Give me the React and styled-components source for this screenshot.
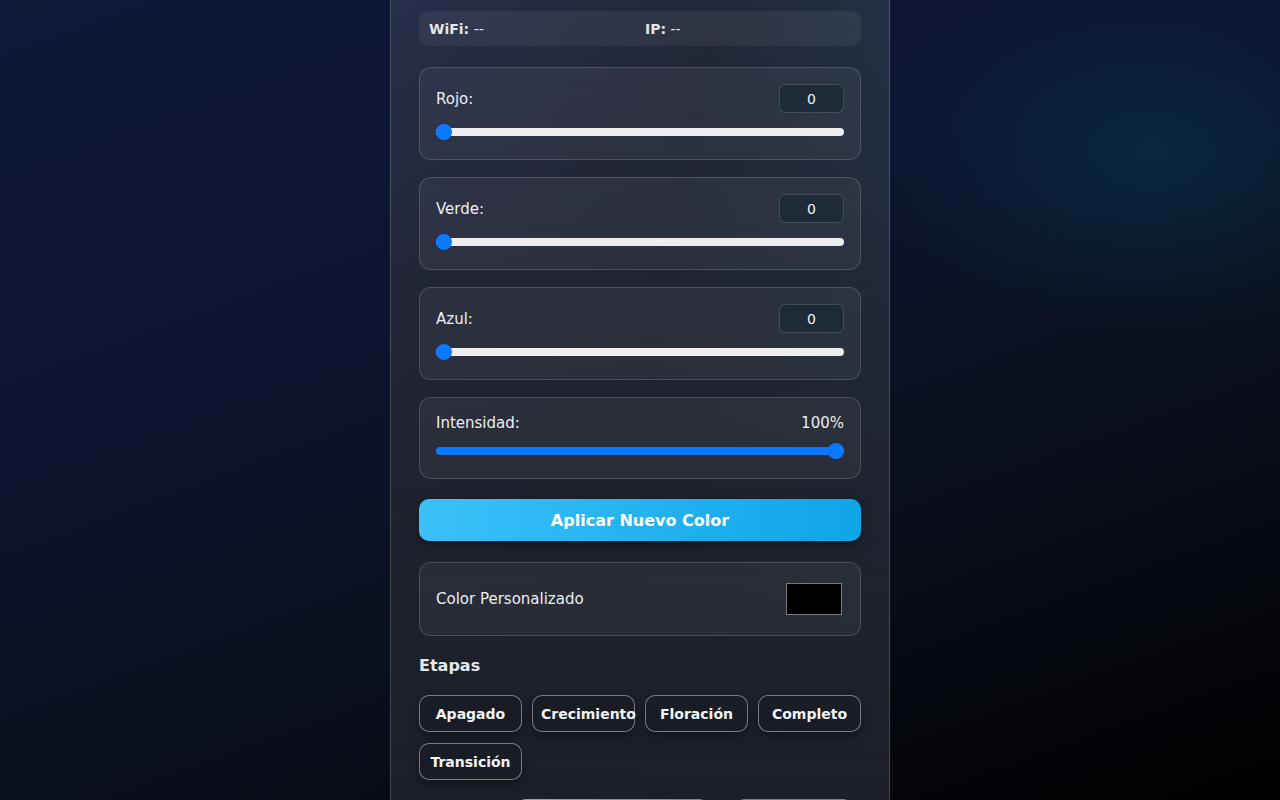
import React from "react";
import styled, { createGlobalStyle } from "styled-components";

const GlobalStyle = createGlobalStyle`
  html, body {
    margin: 0;
    height: 100%;
    overflow: hidden;
  }
  body {
    font-family: "DejaVu Sans", Verdana, sans-serif;
    color: #e5e7eb;
    background:
      radial-gradient(ellipse 420px 260px at 90% 19%, rgba(8, 44, 66, 0.8), transparent 70%),
      linear-gradient(160deg, #0f1838 0%, #0d1430 35%, #0a0f1c 65%, #000000 100%);
    background-attachment: fixed;
  }
`;

const Page = styled.div`
  display: flex;
  justify-content: center;
  min-height: 100vh;
`;

const Panel = styled.div`
  box-sizing: border-box;
  width: 500px;
  padding: 11px 28px 40px;
  border-left: 1px solid rgba(255, 255, 255, 0.18);
  border-right: 1px solid rgba(255, 255, 255, 0.18);
  background:
    linear-gradient(to bottom, rgba(28, 31, 39, 0) 0%, rgba(30, 33, 42, 0.75) 45%, #1c1f27 90%),
    linear-gradient(100deg, #272e4a 0%, #222839 50%, #23374f 100%);
  display: flex;
  flex-direction: column;
`;

const StatusBar = styled.div`
  display: grid;
  grid-template-columns: 1fr 1fr;
  gap: 10px;
  padding: 0 10px;
  height: 35px;
  align-items: center;
  border-radius: 10px;
  background: rgba(255, 255, 255, 0.06);
  font-size: 14px;
  color: #e5e7eb;
  margin-bottom: 21px;

  b {
    font-weight: bold;
  }
`;

const Card = styled.div`
  box-sizing: border-box;
  border: 1px solid rgba(255, 255, 255, 0.16);
  border-radius: 12px;
  background: rgba(255, 255, 255, 0.05);
  padding: ${(p) => p.$pad || "16px 16px 19px"};
  margin-bottom: ${(p) => p.$mb || 17}px;
  display: flex;
  flex-direction: ${(p) => (p.$row ? "row" : "column")};
  align-items: ${(p) => (p.$row ? "center" : "stretch")};
  justify-content: space-between;
  gap: 11px;
`;

const LabelRow = styled.div`
  display: flex;
  align-items: center;
  justify-content: space-between;
  min-height: 18px;
`;

const Label = styled.span`
  font-size: 15px;
  color: #eceef1;
`;

const ValueBox = styled.div`
  box-sizing: border-box;
  width: 65px;
  height: 29px;
  display: flex;
  align-items: center;
  justify-content: center;
  border-radius: 6px;
  border: 1px solid rgba(255, 255, 255, 0.16);
  background: #1f2a38;
  color: #f3f4f6;
  font-size: 14px;
`;

const Range = styled.input.attrs({ type: "range" })`
  -webkit-appearance: none;
  appearance: none;
  width: 408px;
  height: 16px;
  margin: 0;
  background: transparent;

  &::-webkit-slider-runnable-track {
    height: 8px;
    border-radius: 4px;
    background: var(--track);
  }
  &::-webkit-slider-thumb {
    -webkit-appearance: none;
    width: 16px;
    height: 16px;
    border-radius: 50%;
    background: #0a78ff;
    border: none;
    margin-top: -4px;
  }
`;

const ApplyButton = styled.button`
  height: 42px;
  border: none;
  border-radius: 10px;
  background: linear-gradient(100deg, #3bc1f8 0%, #0ea5e9 100%);
  color: #ffffff;
  font-family: inherit;
  font-size: 16px;
  font-weight: bold;
  box-shadow: 0 4px 14px rgba(0, 0, 0, 0.35);
  margin-bottom: 21px;
  cursor: pointer;
`;

const Swatch = styled.span`
  box-sizing: border-box;
  width: 56px;
  height: 32px;
  border: 1px solid #7a7a7a;
  background: ${(p) => p.$color};
  margin-right: 2px;
`;

const Heading = styled.h3`
  margin: 1px 0 19px;
  font-size: 16px;
  font-weight: bold;
  line-height: 20px;
  color: #e5e7eb;
`;

const StageGrid = styled.div`
  display: grid;
  grid-template-columns: repeat(4, minmax(0, 1fr));
  column-gap: 10px;
  row-gap: 11px;
  margin-bottom: 19px;
`;

const StageButton = styled.button`
  box-sizing: border-box;
  height: 37px;
  padding: 0 8px;
  border: 1px solid rgba(255, 255, 255, 0.42);
  border-radius: 10px;
  background: rgba(20, 23, 30, 0.35);
  color: #f3f4f6;
  font-family: inherit;
  font-size: 14px;
  font-weight: bold;
  white-space: nowrap;
  display: flex;
  align-items: center;
  justify-content: ${(p) => (p.$overflow ? "flex-start" : "center")};
  box-shadow: 0 4px 10px rgba(0, 0, 0, 0.35);
  cursor: pointer;
`;

const ActionRow = styled.div`
  display: flex;
  gap: 26px;
  padding-left: 97px;
`;

const ActionButton = styled.button`
  width: ${(p) => p.$w}px;
  height: 42px;
  border: none;
  border-radius: 10px;
  background: ${(p) =>
    p.$danger ? "#ef5350" : "linear-gradient(100deg, #3bc1f8 0%, #0ea5e9 100%)"};
`;

const channels = [
  { name: "Rojo", value: 0 },
  { name: "Verde", value: 0 },
  { name: "Azul", value: 0 },
];

const stages = ["Apagado", "Crecimiento", "Floración", "Completo", "Transición"];

const trackFill = (pct, fill, rest) =>
  `linear-gradient(to right, ${fill} 0%, ${fill} ${pct}%, ${rest} ${pct}%, ${rest} 100%)`;

const App = () => {
  const intensity = 100;
  return (
    <>
      <GlobalStyle />
      <Page>
        <Panel>
          <StatusBar>
            <span>
              <b>WiFi:</b> --
            </span>
            <span>
              <b>IP:</b> --
            </span>
          </StatusBar>

          {channels.map((c) => (
            <Card key={c.name}>
              <LabelRow>
                <Label>{c.name}:</Label>
                <ValueBox>{c.value}</ValueBox>
              </LabelRow>
              <Range
                min={0}
                max={255}
                defaultValue={c.value}
                style={{ "--track": trackFill((c.value / 255) * 100, "#0a78ff", "#eeeeee") }}
              />
            </Card>
          ))}

          <Card $mb={20}>
            <LabelRow>
              <Label>Intensidad:</Label>
              <Label>{intensity}%</Label>
            </LabelRow>
            <Range
              min={0}
              max={100}
              defaultValue={intensity}
              style={{ "--track": trackFill(intensity, "#0a78ff", "#eeeeee") }}
            />
          </Card>

          <ApplyButton>Aplicar Nuevo Color</ApplyButton>

          <Card $row $pad="20px 16px" $mb={19}>
            <Label>Color Personalizado</Label>
            <Swatch $color="#000000" />
          </Card>

          <Heading>Etapas</Heading>
          <StageGrid>
            {stages.map((s) => (
              <StageButton key={s} $overflow={s === "Crecimiento"}>
                {s}
              </StageButton>
            ))}
          </StageGrid>

          <ActionRow>
            <ActionButton $w={193} aria-label="Guardar" />
            <ActionButton $w={118} $danger aria-label="Reiniciar" />
          </ActionRow>
        </Panel>
      </Page>
    </>
  );
};

export default App;
